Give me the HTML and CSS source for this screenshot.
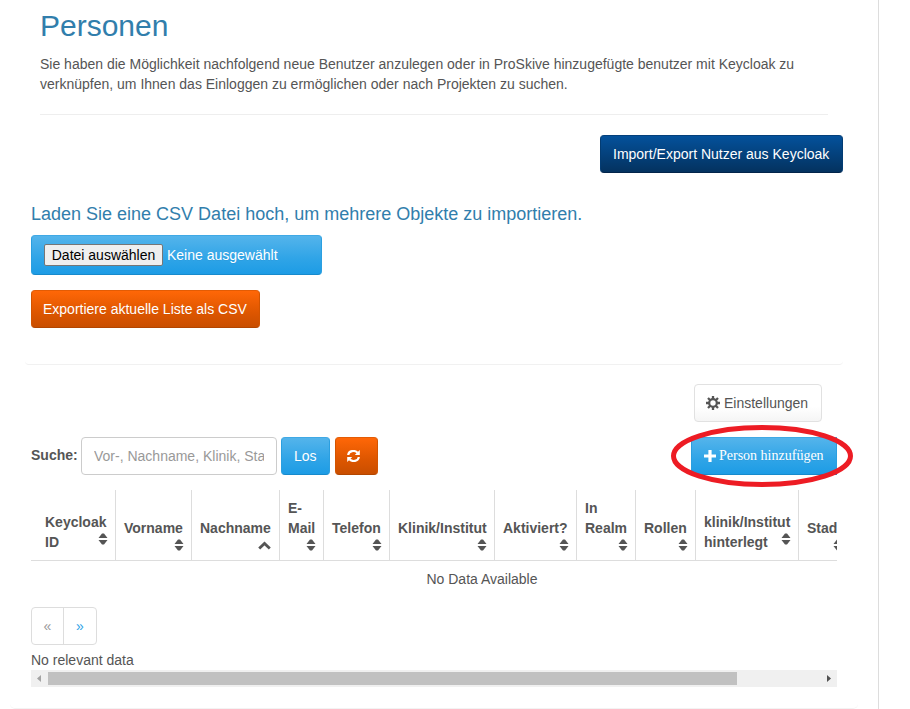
FILE: index.html
```html
<!DOCTYPE html>
<html lang="de">
<head>
<meta charset="utf-8">
<title>Personen</title>
<link rel="stylesheet" href="styles.css">
</head>
<body>
<svg class="defs" width="0" height="0">
  <symbol id="sort" viewBox="0 0 10 12"><path d="M4 .5H6L9.5 5H.5zM.5 7H9.5L6 11.5H4z"/></symbol>
  <symbol id="up" viewBox="0 0 13 9"><path d="M1.2 7.6L6.5 2.4L11.8 7.6" fill="none" stroke="#555" stroke-width="2.8"/></symbol>
</svg>
<main class="page">
  <div class="card">
    <header class="intro">
      <h1>Personen</h1>
      <p>Sie haben die Möglichkeit nachfolgend neue Benutzer anzulegen oder in ProSkive hinzugefügte benutzer mit Keycloak zu verknüpfen, um Ihnen das Einloggen zu ermöglichen oder nach Projekten zu suchen.</p>
    </header>
    <section class="import">
      <button class="btn navy">Import/Export Nutzer aus Keycloak</button>
      <h4>Laden Sie eine CSV Datei hoch, um mehrere Objekte zu importieren.</h4>
      <div class="btn blue file"><span class="choose">Datei auswählen</span><span>Keine ausgewählt</span></div>
      <button class="btn orange export">Exportiere aktuelle Liste als CSV</button>
    </section>
    <section class="list">
      <button class="btn plain settings"><svg width="14" height="14" viewBox="0 0 14 14"><circle cx="7" cy="7" r="3.8" fill="none" stroke="#555" stroke-width="2.2"/><path d="M7 0V3M7 11V14M0 7H3M11 7H14M2 2L4.2 4.2M9.8 9.8L12 12M2 12L4.2 9.8M9.8 4.2L12 2" stroke="#555" stroke-width="2.3"/></svg>Einstellungen</button>
      <div class="toolbar">
        <label for="q">Suche:</label>
        <input id="q" type="text" placeholder="Vor-, Nachname, Klinik, Stadt">
        <button class="btn blue go">Los</button>
        <button class="btn orange refresh" aria-label="Neu laden"><svg width="13" height="12" viewBox="0 0 13 12"><path d="M1.2 5C1.7 .6 7.8-.2 10.5 2.8M11.8 7C11.3 11.4 5.2 12.2 2.5 9.2" fill="none" stroke="#fff" stroke-width="2.2"/><path d="M12.8 0V5H7.8zM.2 12V7H5.2z" fill="#fff"/></svg></button>
        <div class="add-wrap">
          <button class="btn blue add"><svg width="12" height="12" viewBox="0 0 12 12"><path d="M4.4 0H7.6V4.4H12V7.6H7.6V12H4.4V7.6H0V4.4H4.4z" fill="#fff"/></svg>Person hinzufügen</button>
          <svg class="mark" width="184" height="64" viewBox="0 0 184 64"><ellipse cx="92" cy="32" rx="88.5" ry="28.6"/></svg>
        </div>
      </div>
      <div class="scroller">
        <div class="thead">
          <div class="th side"><span>Keycloak ID</span><svg class="ic"><use href="#sort"/></svg></div>
          <div class="th"><span>Vorname</span><svg class="ic"><use href="#sort"/></svg></div>
          <div class="th"><span>Nachname</span><svg class="ic asc"><use href="#up"/></svg></div>
          <div class="th"><span>E-Mail</span><svg class="ic"><use href="#sort"/></svg></div>
          <div class="th"><span>Telefon</span><svg class="ic"><use href="#sort"/></svg></div>
          <div class="th"><span>Klinik/Institut</span><svg class="ic"><use href="#sort"/></svg></div>
          <div class="th"><span>Aktiviert?</span><svg class="ic"><use href="#sort"/></svg></div>
          <div class="th"><span>In Realm</span><svg class="ic"><use href="#sort"/></svg></div>
          <div class="th"><span>Rollen</span><svg class="ic"><use href="#sort"/></svg></div>
          <div class="th side last2"><span>klinik/Institut hinterlegt</span><svg class="ic"><use href="#sort"/></svg></div>
          <div class="th"><span>Stadt</span><svg class="ic"><use href="#sort"/></svg></div>
        </div>
        <div class="empty">No Data Available</div>
        <div class="pager"><span>«</span><span class="next">»</span></div>
        <div class="status">No relevant data</div>
      </div>
      <div class="bar">
        <svg width="17" height="17"><path d="M10 5V12L6 8.5z" fill="#a3a3a3"/></svg>
        <div class="thumb"></div>
        <svg class="right" width="17" height="17"><path d="M7 5V12L11 8.5z" fill="#505050"/></svg>
      </div>
    </section>
  </div>
</main>
</body>
</html>
```

FILE: styles.css
```css
* { box-sizing: border-box; }
body { margin: 0; background: #fff; color: #555; font: 14px/20px "Liberation Sans", Arial, sans-serif; overflow: hidden; }
.defs { position: absolute; }
.page { width: 879px; height: 709px; border-right: 1px solid #ddd; padding-left: 10px; }
.card { width: 848px; height: 709px; border: solid #f3f3f3; border-width: 0 0 1px; border-radius: 0 0 5px 5px; }
.intro { width: 788px; height: 115px; margin-left: 30px; padding-top: 8px; border-bottom: 1px solid #eee; }
h1 { margin: 0; font-size: 30px; line-height: 36px; font-weight: 400; color: #317eac; }
p { margin: 10px 0 0; width: 775px; }
.import { width: 818px; height: 250px; margin-left: 15px; padding: 20px 0 0 6px; border-bottom: 1px solid #f1f1f1; border-radius: 0 0 4px 4px; display: flex; flex-direction: column; align-items: flex-start; }
.btn { display: inline-flex; align-items: center; height: 38px; padding: 0 12px; border: 1px solid; border-radius: 4px; font: inherit; color: #fff; white-space: nowrap; flex: none; text-shadow: 0 1px 0 rgba(0,0,0,.05); }
.navy { width: 243px; margin-left: 569px; background: linear-gradient(#04519b, #04325f); border-color: #04407b #033c73 #02244a; }
.blue { background: linear-gradient(#54b4eb, #2fa4e7 60%, #1d9ce5); border-color: #40a9e5 #2b9fe0 #178acc; }
.orange { background: linear-gradient(#ff6707, #dd5600 60%, #c94e00); border-color: #e35c05 #d35400 #b34600; }
.plain { color: #555; background: linear-gradient(#fff 60%, #f5f5f5); border-color: #e1e1e1; }
h4 { margin: 31px 0 0; font-size: 18px; line-height: 20px; font-weight: 400; color: #317eac; white-space: nowrap; }
.file { width: 291px; height: 40px; margin-top: 11px; }
.choose { background: #efefef; color: #000; border: 1px solid #767676; border-radius: 2px; height: 22px; width: 119px; text-align: center; margin-right: 4px; text-shadow: none; }
.export { width: 229px; margin-top: 15px; padding-left: 11px; }
.list { margin-left: 21px; width: 806px; padding-top: 19px; }
.settings { width: 128px; margin-left: 663px; padding-left: 11px; gap: 4px; display: flex; }
.toolbar { display: flex; height: 38px; margin-top: 15px; }
label { width: 50px; font-weight: 700; line-height: 36px; }
input { width: 196px; height: 38px; border: 1px solid #ccc; border-radius: 4px; padding: 0 12px; font: inherit; color: #555; }
input::placeholder { color: #999; opacity: 1; }
.go { width: 49px; margin-left: 4px; }
.refresh { width: 43px; margin-left: 5px; padding-left: 11px; }
.add-wrap { position: relative; margin-left: auto; }
.add { width: 146px; font-family: "Liberation Serif", serif; gap: 3px; border-radius: 0; }
.mark { position: absolute; left: -21px; top: -13px; fill: none; stroke: #ed1c24; stroke-width: 5; }
.scroller { overflow: hidden; margin-top: 15px; height: 180px; }
.thead { display: grid; grid-template-columns: 85px 76px 88px 44px 66px 105px 82px 59px 60px 103px 52px; width: 820px; height: 71px; border-bottom: 1px solid #ddd; }
.th { border-right: 1px solid #ddd; padding: 0 8px 9px; font-weight: 700; display: flex; flex-direction: column; justify-content: flex-end; }
.ic { width: 10px; height: 12px; fill: #555; align-self: flex-end; margin: 1px -1px 0 0; flex: none; }
.asc { width: 13px; height: 9px; margin: 3px 0 1px; }
.side { flex-direction: row; padding: 22px 8px 0 14px; justify-content: space-between; }
.side span { width: 64px; flex: none; }
.side .ic { align-self: flex-start; margin: 21px -1px 0 -12px; }
.last2 { padding-left: 8px; }
.last2 span { width: 88px; }
.empty { width: 902px; text-align: center; padding-top: 8px; height: 46px; }
.pager { display: flex; width: 66px; height: 38px; border: 1px solid #ddd; border-radius: 4px; color: #999; line-height: 36px; text-align: center; }
.pager span { width: 31px; }
.pager .next { width: 33px; border-left: 1px solid #ddd; color: #2fa4e7; }
.status { margin-top: 5px; }
.bar { display: flex; height: 17px; background: #f0f0f0; align-items: center; }
.thumb { width: 689px; height: 13px; background: #c1c1c1; }
.right { margin-left: auto; }
```
